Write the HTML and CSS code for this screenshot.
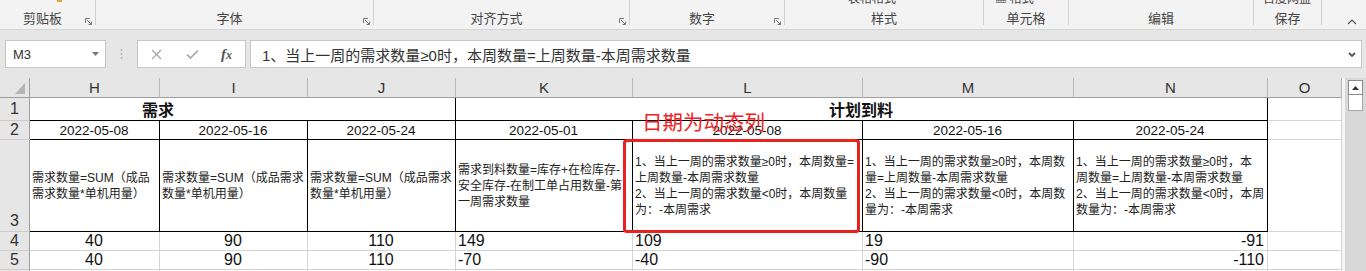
FILE: index.html
```html
<!DOCTYPE html>
<html lang="zh-CN">
<head>
    <meta charset="UTF-8">
    <meta name="viewport" content="width=device-width, initial-scale=1.0">
    <title>需求计划</title>
    <link rel="stylesheet" href="styles.css">
</head>
<body>
    <div class="ribbon">
        <div class="grp g-clip">
            <div class="peek"><i class="brush"></i></div>
            <div class="grp-foot"><span class="grp-label">剪贴板</span><svg class="launch" viewBox="0 0 7 7"><path d="M0.5 5V0.5H5" /><path d="M2 2L6.5 6.5M6.5 3.5V6.5H3.5" /></svg></div>
        </div>
        <div class="grp g-font">
            <div class="grp-foot"><span class="grp-label">字体</span><svg class="launch" viewBox="0 0 7 7"><path d="M0.5 5V0.5H5" /><path d="M2 2L6.5 6.5M6.5 3.5V6.5H3.5" /></svg></div>
        </div>
        <div class="grp g-align">
            <div class="grp-foot"><span class="grp-label">对齐方式</span><svg class="launch" viewBox="0 0 7 7"><path d="M0.5 5V0.5H5" /><path d="M2 2L6.5 6.5M6.5 3.5V6.5H3.5" /></svg></div>
        </div>
        <div class="grp g-num">
            <div class="grp-foot"><span class="grp-label">数字</span><svg class="launch" viewBox="0 0 7 7"><path d="M0.5 5V0.5H5" /><path d="M2 2L6.5 6.5M6.5 3.5V6.5H3.5" /></svg></div>
        </div>
        <div class="grp g-style">
            <div class="peek"><span>表格格式</span></div>
            <div class="grp-foot"><span class="grp-label">样式</span></div>
        </div>
        <div class="grp g-cell">
            <div class="peek"><span>▦ 格式</span></div>
            <div class="grp-foot"><span class="grp-label">单元格</span></div>
        </div>
        <div class="grp g-edit">
            <div class="grp-foot"><span class="grp-label">编辑</span></div>
        </div>
        <div class="grp g-save">
            <div class="peek"><span>百度网盘</span></div>
            <div class="grp-foot"><span class="grp-label">保存</span></div>
        </div>
        <div class="grp g-end">
            <svg class="caret" viewBox="0 0 10 6"><path d="M1 5L5 1L9 5" /></svg>
        </div>
    </div>

    <div class="fbar">
        <div class="namebox">
            <span>M3</span>
            <svg class="nb-drop" viewBox="0 0 7 4"><polygon points="0,0 7,0 3.5,4" /></svg>
        </div>
        <div class="dots">
            <svg viewBox="0 0 3 12"><circle cx="1.5" cy="2" r="1" /><circle cx="1.5" cy="6" r="1" /><circle cx="1.5" cy="10" r="1" /></svg>
        </div>
        <div class="fbtns">
            <svg class="fb-x" viewBox="0 0 11 11"><path d="M1 1L10 10M10 1L1 10" /></svg>
            <svg class="fb-ok" viewBox="0 0 13 10"><path d="M1 5.5L4.5 9L12 1.5" /></svg>
            <span class="fx">f<span>x</span></span>
        </div>
        <div class="finput">
            <span>1、当上一周的需求数量≥0时，本周数量=上周数量-本周需求数量</span>
            <svg class="fi-drop" viewBox="0 0 8 5"><path d="M1 1L4 4L7 1" /></svg>
        </div>
    </div>

    <div class="sheet">
        <div class="grid">
            <!-- column headers -->
            <div class="ch corner"><svg viewBox="0 0 10 11"><polygon points="10,0 10,11 0,11" /></svg></div>
            <div class="ch">H</div>
            <div class="ch">I</div>
            <div class="ch">J</div>
            <div class="ch">K</div>
            <div class="ch">L</div>
            <div class="ch">M</div>
            <div class="ch">N</div>
            <div class="ch">O</div>

            <!-- row 1 -->
            <div class="rh">1</div>
            <div class="c bk span3 title t-need">需求</div>
            <div class="c bk span4 title center">计划到料</div>
            <div class="c"></div>

            <!-- row 2 -->
            <div class="rh">2</div>
            <div class="c bk date">2022-05-08</div>
            <div class="c bk date">2022-05-16</div>
            <div class="c bk date">2022-05-24</div>
            <div class="c bk date">2022-05-01</div>
            <div class="c bk date">2022-05-08</div>
            <div class="c bk date">2022-05-16</div>
            <div class="c bk date">2022-05-24</div>
            <div class="c"></div>

            <!-- row 3 -->
            <div class="rh rh-low">3</div>
            <div class="c bk note-cell">需求数量=SUM（成品<br>需求数量*单机用量）</div>
            <div class="c bk note-cell">需求数量=SUM（成品需求<br>数量*单机用量）</div>
            <div class="c bk note-cell">需求数量=SUM（成品需求<br>数量*单机用量）</div>
            <div class="c bk note-cell">需求到料数量=库存+在检库存-<br>安全库存-在制工单占用数量-第<br>一周需求数量</div>
            <div class="c bk note-cell">1、当上一周的需求数量≥0时，本周数量=<br>上周数量-本周需求数量<br>2、当上一周的需求数量&lt;0时，本周数量<br>为：-本周需求</div>
            <div class="c bk note-cell">1、当上一周的需求数量≥0时，本周数<br>量=上周数量-本周需求数量<br>2、当上一周的需求数量&lt;0时，本周数<br>量为：-本周需求</div>
            <div class="c bk note-cell">1、当上一周的需求数量≥0时，本<br>周数量=上周数量-本周需求数量<br>2、当上一周的需求数量&lt;0时，本周<br>数量为：-本周需求</div>
            <div class="c"></div>

            <!-- row 4 -->
            <div class="rh">4</div>
            <div class="c center">40</div>
            <div class="c center">90</div>
            <div class="c center">110</div>
            <div class="c">149</div>
            <div class="c">109</div>
            <div class="c">19</div>
            <div class="c right">-91</div>
            <div class="c"></div>

            <!-- row 5 -->
            <div class="rh">5</div>
            <div class="c center">40</div>
            <div class="c center">90</div>
            <div class="c center">110</div>
            <div class="c">-70</div>
            <div class="c">-40</div>
            <div class="c">-90</div>
            <div class="c right">-110</div>
            <div class="c"></div>

            <!-- row 6 -->
            <div class="rh">6</div>
            <div class="c"></div>
            <div class="c"></div>
            <div class="c"></div>
            <div class="c"></div>
            <div class="c"></div>
            <div class="c"></div>
            <div class="c"></div>
            <div class="c"></div>
        </div>

        <div class="vscroll">
            <div class="vs-up"><svg viewBox="0 0 7 4"><polygon points="0,4 7,4 3.5,0" /></svg></div>
            <div class="vs-thumb"></div>
        </div>
    </div>

    <!-- annotation drawn over the sheet -->
    <div class="anno-text">日期为动态列</div>
    <div class="anno-box"></div>
</body>
</html>
```

FILE: styles.css
```css
body {
    margin: 0;
    width: 1366px;
    height: 271px;
    overflow: hidden;
    position: relative;
    background-color: #e6e6e6;
    font-family: "Liberation Sans", "Noto Sans CJK SC", sans-serif;
    color: #222;
}

/* ribbon (group labels only) */
.ribbon {
    display: flex;
    height: 30px;
    box-sizing: border-box;
    background-color: #f3f3f3;
    border-bottom: 1px solid #d5d5d5;
}

.grp {
    display: flex;
    flex-direction: column;
    height: 25px;
    box-sizing: border-box;
    border-right: 1px solid #d1d1d1;
}

.g-clip { width: 96px; }
.g-font { width: 278px; }
.g-align { width: 256px; }
.g-num { width: 155px; }
.g-style { width: 199px; }
.g-cell { width: 85px; }
.g-edit { width: 185px; }
.g-save { width: 68px; }

.g-end {
    flex: 1;
    border-right: none;
    align-items: flex-end;
    justify-content: flex-end;
    padding-right: 9px;
}

.peek {
    height: 4px;
    overflow: hidden;
    font-family: "Noto Sans CJK SC", sans-serif;
    font-size: 12px;
    line-height: 12px;
    color: #444;
}

.peek span {
    display: block;
    margin-top: -8px;
    white-space: nowrap;
}

.g-style .peek { padding-left: 63px; }
.g-cell .peek { padding-left: 11px; }
.g-save .peek { padding-left: 9px; }

.brush {
    display: block;
    width: 5px;
    height: 2px;
    margin-left: 57px;
    background-color: #e9a23b;
}

.grp-foot {
    margin-top: auto;
    display: flex;
    align-items: flex-end;
}

.grp-label {
    flex: 1;
    text-align: center;
    font-family: "Noto Sans CJK SC", sans-serif;
    font-size: 13px;
    line-height: 14px;
    color: #444;
}

.launch {
    width: 7px;
    height: 7px;
    margin-right: 3px;
    fill: none;
    stroke: #777;
    stroke-width: 1;
}

.caret {
    width: 10px;
    height: 6px;
    fill: none;
    stroke: #555;
    stroke-width: 1.2;
}

/* formula bar */
.fbar {
    display: flex;
    height: 28px;
    margin-top: 10px;
}

.namebox {
    width: 101px;
    margin-left: 5px;
    box-sizing: border-box;
    background-color: #fff;
    border: 1px solid #c6c6c6;
    display: flex;
    align-items: center;
    justify-content: space-between;
    padding: 0 6px 0 7px;
    font-size: 13px;
    color: #333;
}

.nb-drop {
    width: 7px;
    height: 4px;
    fill: #777;
}

.dots {
    width: 31px;
    display: flex;
    align-items: center;
    justify-content: center;
}

.dots svg {
    width: 3px;
    height: 12px;
    fill: #b3b3b3;
}

.fbtns {
    width: 109px;
    box-sizing: border-box;
    background-color: #fff;
    border: 1px solid #c6c6c6;
    display: flex;
    align-items: center;
    padding-left: 13px;
}

.fb-x {
    width: 11px;
    height: 11px;
    fill: none;
    stroke: #a8a8a8;
    stroke-width: 1.3;
}

.fb-ok {
    width: 13px;
    height: 10px;
    margin-left: 24px;
    fill: none;
    stroke: #a8a8a8;
    stroke-width: 1.7;
}

.fx {
    margin-left: 22px;
    font-family: "Liberation Serif", serif;
    font-style: italic;
    font-weight: bold;
    font-size: 15px;
    color: #555;
}

.fx span {
    font-size: 12px;
}

.finput {
    width: 1112px;
    margin-left: 4px;
    box-sizing: border-box;
    background-color: #fff;
    border: 1px solid #c6c6c6;
    display: flex;
    align-items: center;
    justify-content: space-between;
    padding: 0 5px 0 11px;
    font-size: 15px;
    color: #333;
}

.fi-drop {
    width: 8px;
    height: 5px;
    fill: none;
    stroke: #555;
    stroke-width: 1.8;
}

/* sheet */
.sheet {
    display: flex;
    margin-top: 10px;
}

.grid {
    display: grid;
    grid-template-columns: 30px 130px 148px 148px 177px 230px 211px 194px 74px;
    grid-template-rows: 20px 23px 19px 92px 19px 19px 19px;
    background-color: #fff;
}

.ch {
    display: flex;
    align-items: center;
    justify-content: center;
    background-color: #e6e6e6;
    border-right: 1px solid #b9b9b9;
    border-bottom: 1px solid #9e9e9e;
    box-sizing: border-box;
    font-size: 15px;
    color: #333;
}

.corner {
    align-items: flex-end;
    justify-content: flex-end;
    padding: 0 4px 3px 0;
    border-right-color: #9e9e9e;
}

.corner svg {
    width: 10px;
    height: 11px;
    fill: #b5b5b5;
}

.rh {
    display: flex;
    align-items: center;
    justify-content: center;
    background-color: #e6e6e6;
    border-right: 1px solid #9e9e9e;
    border-bottom: 1px solid #cbcbcb;
    box-sizing: border-box;
    font-size: 16px;
    color: #333;
}

.rh-low {
    align-items: flex-end;
    padding-bottom: 1px;
}

.c {
    display: flex;
    align-items: center;
    box-sizing: border-box;
    border-right: 1px solid #d4d4d4;
    border-bottom: 1px solid #d4d4d4;
    padding: 0 3px 0 2px;
    overflow: hidden;
    white-space: nowrap;
    font-size: 16px;
    color: #111;
}

.bk {
    border-right-color: #000;
    border-bottom-color: #000;
}

.span3 { grid-column: span 3; }
.span4 { grid-column: span 4; }

.center { justify-content: center; }
.right { justify-content: flex-end; }

.title {
    font-family: "Noto Sans CJK SC", sans-serif;
    font-weight: bold;
    font-size: 16px;
}

.t-need {
    padding-left: 112px;
}

.date {
    justify-content: center;
    font-size: 13.5px;
}

.note-cell {
    font-size: 12px;
    line-height: 16px;
    color: #222;
}

.vscroll {
    width: 24px;
    box-sizing: border-box;
    background-color: #d8d8d8;
    border-left: 3px solid #f4f4f4;
    padding: 2px 0 0 3px;
}

.vs-up {
    width: 15px;
    height: 15px;
    box-sizing: border-box;
    background-color: #fff;
    border: 1px solid #8a8a8a;
    display: flex;
    align-items: center;
    justify-content: center;
}

.vs-up svg {
    width: 7px;
    height: 4px;
    fill: #333;
}

.vs-thumb {
    width: 15px;
    height: 16px;
    box-sizing: border-box;
    background-color: #fff;
    border: 1px solid #a6a6a6;
    border-top: none;
}

/* red annotation */
.anno-text {
    position: absolute;
    left: 642px;
    top: 109px;
    font-family: "Noto Sans CJK SC", sans-serif;
    font-size: 20.5px;
    line-height: 24px;
    color: #f0211f;
    white-space: nowrap;
}

.anno-box {
    position: absolute;
    left: 623px;
    top: 139px;
    width: 237px;
    height: 94px;
    box-sizing: border-box;
    border: 3px solid #e8231f;
    border-radius: 4px;
}
```
